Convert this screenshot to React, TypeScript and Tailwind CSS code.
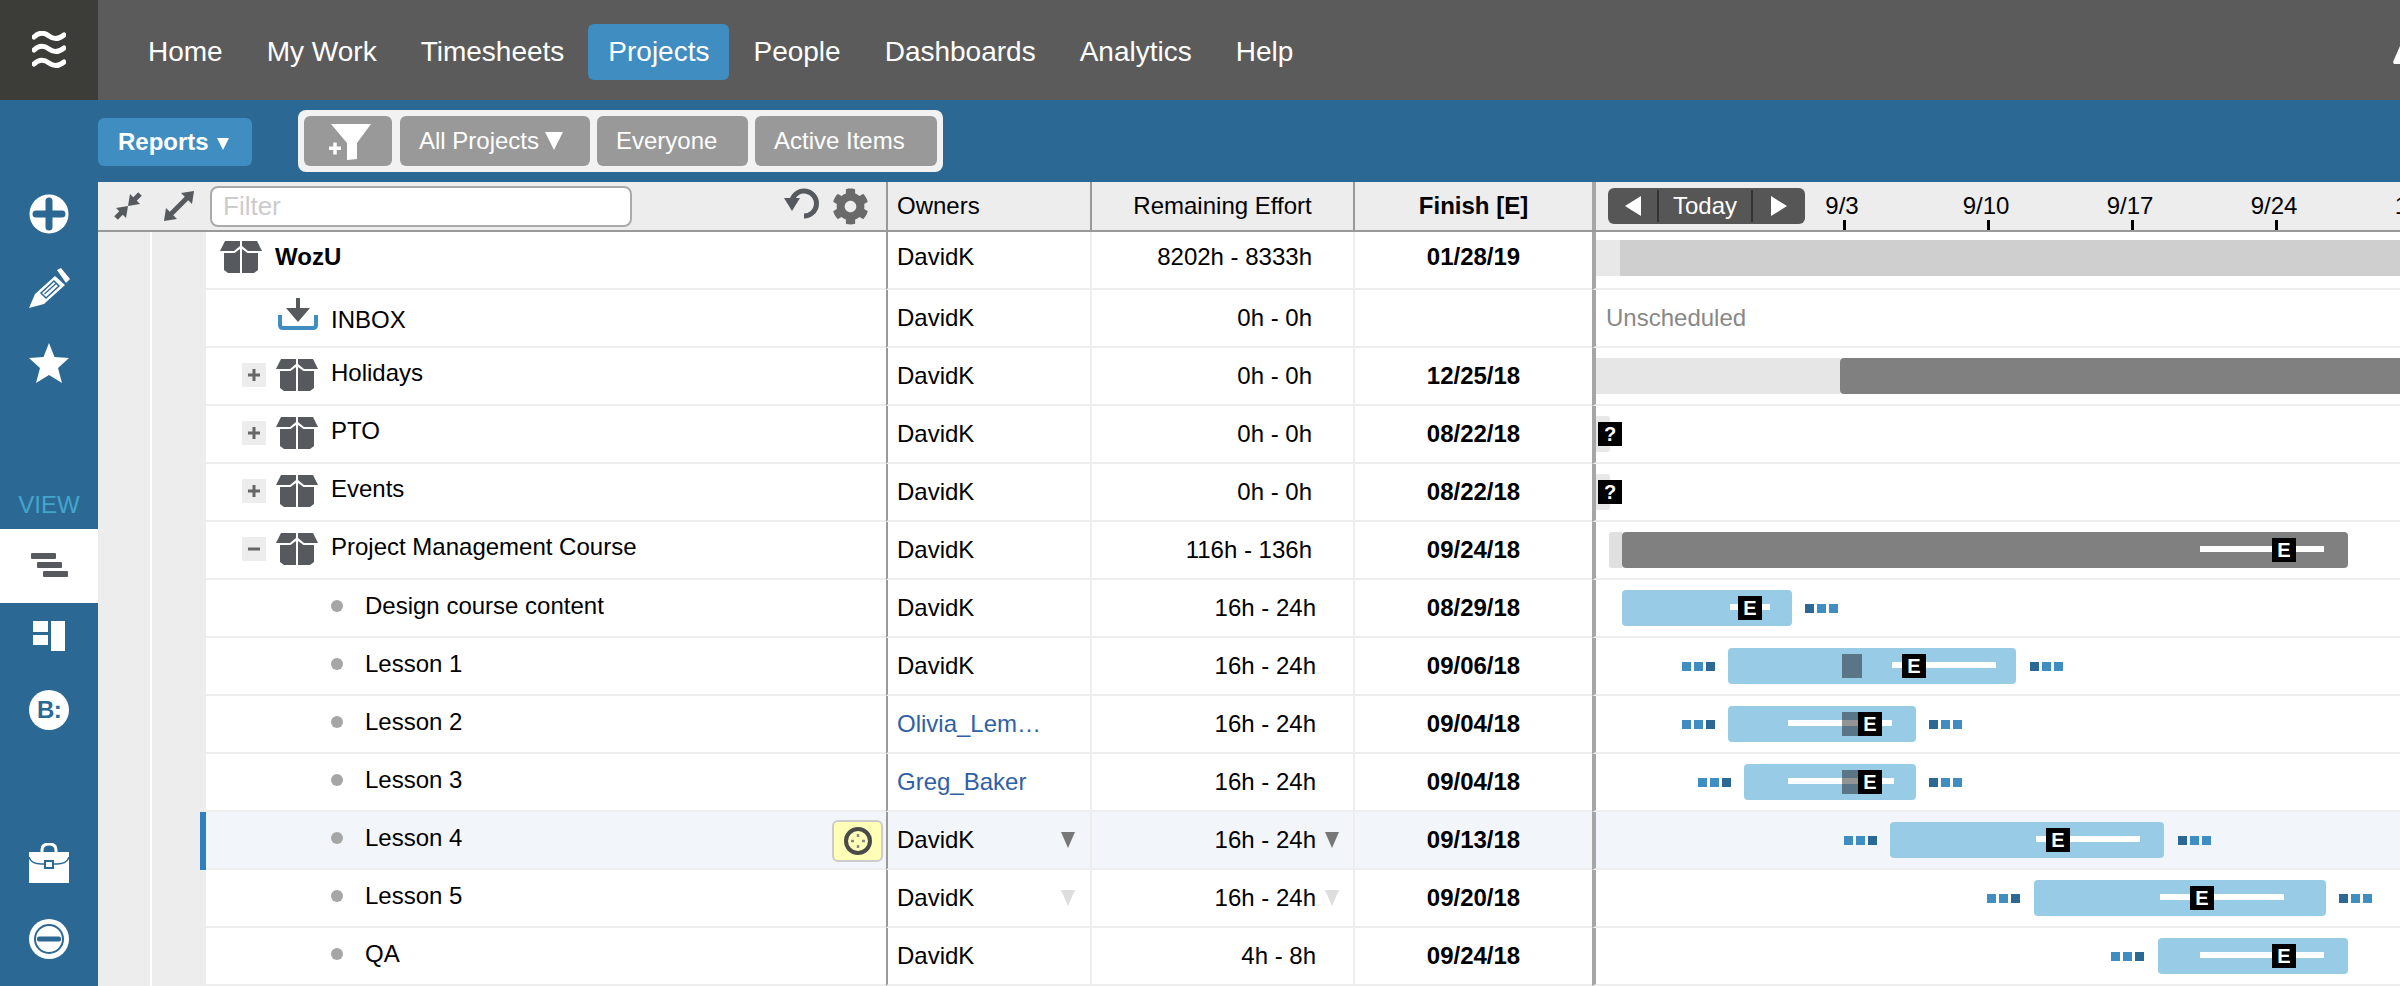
import { FaCog } from 'react-icons/fa';

type Bar = {
  left: number;
  right: number;
  line?: [number, number];
  e?: number;
  marker?: boolean;
  before?: number;
  after?: number;
};

type Row = {
  name: string;
  kind: 'root' | 'inbox' | 'plus' | 'minus' | 'task';
  owner: string;
  ownerLink?: boolean;
  effort: string;
  effortPad: string;
  finish: string;
  bar?: Bar;
};

const NAV = ['Home', 'My Work', 'Timesheets', 'Projects', 'People', 'Dashboards', 'Analytics', 'Help'];

const ROWS: Row[] = [
  { name: 'WozU', kind: 'root', owner: 'DavidK', effort: '8202h - 8333h', effortPad: 'pr-[41px]', finish: '01/28/19' },
  { name: 'INBOX', kind: 'inbox', owner: 'DavidK', effort: '0h - 0h', effortPad: 'pr-[41px]', finish: '' },
  { name: 'Holidays', kind: 'plus', owner: 'DavidK', effort: '0h - 0h', effortPad: 'pr-[41px]', finish: '12/25/18' },
  { name: 'PTO', kind: 'plus', owner: 'DavidK', effort: '0h - 0h', effortPad: 'pr-[41px]', finish: '08/22/18' },
  { name: 'Events', kind: 'plus', owner: 'DavidK', effort: '0h - 0h', effortPad: 'pr-[41px]', finish: '08/22/18' },
  { name: 'Project Management Course', kind: 'minus', owner: 'DavidK', effort: '116h - 136h', effortPad: 'pr-[41px]', finish: '09/24/18' },
  {
    name: 'Design course content', kind: 'task', owner: 'DavidK', effort: '16h - 24h', effortPad: 'pr-[37px]', finish: '08/29/18',
    bar: { left: 1622, right: 1792, line: [1730, 1770], e: 1738, after: 1805 },
  },
  {
    name: 'Lesson 1', kind: 'task', owner: 'DavidK', effort: '16h - 24h', effortPad: 'pr-[37px]', finish: '09/06/18',
    bar: { left: 1728, right: 2016, line: [1892, 1996], e: 1902, marker: true, before: 1682, after: 2030 },
  },
  {
    name: 'Lesson 2', kind: 'task', owner: 'Olivia_Lem…', ownerLink: true, effort: '16h - 24h', effortPad: 'pr-[37px]', finish: '09/04/18',
    bar: { left: 1728, right: 1916, line: [1788, 1892], e: 1858, marker: true, before: 1682, after: 1929 },
  },
  {
    name: 'Lesson 3', kind: 'task', owner: 'Greg_Baker', ownerLink: true, effort: '16h - 24h', effortPad: 'pr-[37px]', finish: '09/04/18',
    bar: { left: 1744, right: 1916, line: [1788, 1894], e: 1858, marker: true, before: 1698, after: 1929 },
  },
  {
    name: 'Lesson 4', kind: 'task', owner: 'DavidK', effort: '16h - 24h', effortPad: 'pr-[37px]', finish: '09/13/18',
    bar: { left: 1890, right: 2164, line: [2036, 2140], e: 2046, before: 1844, after: 2178 },
  },
  {
    name: 'Lesson 5', kind: 'task', owner: 'DavidK', effort: '16h - 24h', effortPad: 'pr-[37px]', finish: '09/20/18',
    bar: { left: 2034, right: 2326, line: [2160, 2284], e: 2190, before: 1987, after: 2339 },
  },
  {
    name: 'QA', kind: 'task', owner: 'DavidK', effort: '4h - 8h', effortPad: 'pr-[37px]', finish: '09/24/18',
    bar: { left: 2158, right: 2348, line: [2200, 2324], e: 2272, before: 2111 },
  },
];

// timeline column starts at x=1596 in the page
const tx = (x: number) => x - 1596;

const TICKS = [
  { label: '9/3', x: 1844 },
  { label: '9/10', x: 1988 },
  { label: '9/17', x: 2132 },
  { label: '9/24', x: 2276 },
  { label: '10/1', x: 2420 },
];

function BoxIcon() {
  return (
    <svg width="42" height="32" viewBox="0 0 42 32" className="shrink-0" fill="#565a5e">
      <polygon points="5,0 20,0 20,5 14,10 0,10" />
      <polygon points="22,0 37,0 42,10 28,10 22,5" />
      <polygon points="4,12 14.500,12 20,8 20,32 8,32 4,29" />
      <polygon points="38,12 27.500,12 22,8 22,32 34,32 38,29" />
    </svg>
  );
}

function InboxIcon() {
  return (
    <svg width="40" height="32" viewBox="0 0 40 32" className="mb-2 shrink-0">
      <path d="M2 17 V27 Q2 30 5 30 H35 Q38 30 38 27 V17" fill="none" stroke="#3f8dc1" strokeWidth="4" />
      <path d="M18 0 H22 V10 H32 L20 24 L8 10 H18 Z" fill="#565a5e" />
    </svg>
  );
}

function Dots({ x, top, dark }: { x: number; top: number; dark: number }) {
  return (
    <div className="absolute flex gap-[3px]" style={{ left: tx(x), top }}>
      {[0, 1, 2].map((i) => (
        <span key={i} className={`h-[9px] w-[9px] ${i === dark ? 'bg-[#2b6994]' : 'bg-[#3f8dc1]'}`} />
      ))}
    </div>
  );
}

function Flag({ x, top, text }: { x: number; top: number; text: string }) {
  return (
    <div
      className="absolute flex h-6 w-6 items-center justify-center bg-black text-[20px] font-bold leading-none text-white"
      style={{ left: tx(x), top }}
    >
      {text}
    </div>
  );
}

function TaskBar({ bar }: { bar: Bar }) {
  return (
    <>
      {bar.before && <Dots x={bar.before} top={24} dark={2} />}
      <div className="absolute top-[10px] h-9 rounded-[4px] bg-[#98cbe6]" style={{ left: tx(bar.left), width: bar.right - bar.left }} />
      {bar.line && <div className="absolute top-6 h-[6px] bg-white" style={{ left: tx(bar.line[0]), width: bar.line[1] - bar.line[0] }} />}
      {bar.marker && <div className="absolute top-4 h-6 w-5 bg-black/[0.42]" style={{ left: tx(1842) }} />}
      {bar.e && <Flag x={bar.e} top={16} text="E" />}
      {bar.after && <Dots x={bar.after} top={24} dark={0} />}
    </>
  );
}

function Gantt({ row, index }: { row: Row; index: number }) {
  if (row.bar) return <TaskBar bar={row.bar} />;
  if (index === 0) {
    return (
      <div className="absolute left-0 right-0 top-2 flex h-9">
        <div className="w-6 bg-[#e8e8e8]" />
        <div className="flex-1 bg-[#cfcfcf]" />
      </div>
    );
  }
  if (index === 1) {
    return <div className="flex h-full items-center pl-[10px] text-[#888]">Unscheduled</div>;
  }
  if (index === 2) {
    return (
      <div className="absolute left-0 right-0 top-[10px] flex h-9">
        <div className="w-[244px] bg-[#e6e6e6]" />
        <div className="flex-1 rounded-l-[4px] bg-[#808080]" />
      </div>
    );
  }
  if (index === 3 || index === 4) {
    return (
      <>
        <div className="absolute left-0 top-[10px] h-9 w-[14px] rounded-r-[3px] bg-[#e8e8e8]" />
        <Flag x={1598} top={16} text="?" />
      </>
    );
  }
  return (
    <>
      <div className="absolute top-[10px] flex h-9" style={{ left: tx(1609), width: 2348 - 1609 }}>
        <div className="w-[13px] rounded-l-[3px] bg-[#e0e0e0]" />
        <div className="flex-1 rounded-[4px] bg-[#808080]" />
      </div>
      <div className="absolute top-6 h-[6px] bg-white" style={{ left: tx(2200), width: 124 }} />
      <Flag x={2272} top={16} text="E" />
    </>
  );
}

function TableRow({ row, index }: { row: Row; index: number }) {
  const selected = row.name === 'Lesson 4';
  const bg = selected ? 'bg-[#f2f5f9]' : 'bg-white';
  const faded = row.name === 'Lesson 5';
  const showCaret = selected || faded;
  const caret = selected ? 'border-t-[#777]' : 'border-t-[#ddd]';
  const lift = index === 0 ? 'pb-[6px]' : '';

  return (
    <div className="flex h-[58px] shrink-0">
      <div className="w-[52px] shrink-0 bg-[#ededed]" />
      <div className="w-[2px] shrink-0 bg-white" />
      <div className="relative w-[54px] shrink-0 bg-[#ededed]">
        {selected && <div className="absolute bottom-0 right-0 top-0 w-[6px] bg-[#2f7ebf]" />}
      </div>

      <div className={`relative flex w-[680px] shrink-0 items-center border-b-2 border-[#eee] ${bg}`}>
        {row.kind === 'root' && (
          <div className="flex items-center pb-[6px] pl-[14px]">
            <BoxIcon />
            <span className="ml-[13px] font-bold">{row.name}</span>
          </div>
        )}
        {row.kind === 'inbox' && (
          <div className="flex items-center pl-[72px]">
            <InboxIcon />
            <span className="ml-[13px] mt-1">{row.name}</span>
          </div>
        )}
        {(row.kind === 'plus' || row.kind === 'minus') && (
          <div className="flex items-center pb-[2px] pl-[36px]">
            <span className="flex h-6 w-6 shrink-0 items-center justify-center bg-[#ededed]">
              <svg width="12" height="12" viewBox="0 0 12 12" fill="#666">
                <rect x="0" y="4.500" width="12" height="3" />
                {row.kind === 'plus' && <rect x="4.500" y="0" width="3" height="12" />}
              </svg>
            </span>
            <span className="ml-[10px]"><BoxIcon /></span>
            <span className="mb-[4px] ml-[13px]">{row.name}</span>
          </div>
        )}
        {row.kind === 'task' && (
          <div className="flex items-center pb-1 pl-[125px]">
            <span className="h-3 w-3 rounded-full bg-[#a6a6a6]" />
            <span className="ml-[22px]">{row.name}</span>
          </div>
        )}
        {selected && (
          <div className="absolute right-[3px] top-2 flex h-[42px] w-[51px] items-center justify-center rounded-[6px] border-2 border-[#ccc] bg-[#ffffb8]">
            <svg width="30" height="30" viewBox="0 0 30 30">
              <circle cx="15" cy="15" r="12" fill="none" stroke="#4a4a4a" strokeWidth="4" />
              <path d="M15 8v3M15 19v3M8 15h3M19 15h3" stroke="#888" strokeWidth="2.500" />
            </svg>
          </div>
        )}
      </div>

      <div className={`flex w-[204px] shrink-0 items-center justify-between border-b-2 border-l-2 border-b-[#eee] border-l-[#999] pl-[9px] pr-[15px] ${bg} ${lift}`}>
        <span className={row.ownerLink ? 'text-[#2f5fa5]' : ''}>{row.owner}</span>
        {showCaret && <span className={`h-0 w-0 border-x-[7px] border-t-[16px] border-x-transparent ${caret}`} />}
      </div>

      <div className={`relative flex w-[263px] shrink-0 items-center justify-end border-b-2 border-l-2 border-[#eee] ${row.effortPad} ${bg} ${lift}`}>
        {row.effort}
        {showCaret && <span className={`absolute left-[233px] top-5 h-0 w-0 border-x-[7px] border-t-[16px] border-x-transparent ${caret}`} />}
      </div>

      <div className={`flex w-[239px] shrink-0 items-center justify-center border-b-2 border-l-2 border-[#eee] font-bold ${bg} ${lift}`}>
        {row.finish}
      </div>

      <div className={`relative min-w-0 flex-1 overflow-hidden border-b-2 border-l-[4px] border-b-[#eee] border-l-[#a6a6a6] ${bg}`}>
        <Gantt row={row} index={index} />
      </div>
    </div>
  );
}

export default function App() {
  return (
    <div className="flex h-[986px] w-[2400px] flex-col overflow-hidden bg-white font-['Liberation_Sans',Arial,sans-serif] text-[24px] leading-none text-black">
      {/* Top nav */}
      <header className="flex h-[100px] shrink-0 items-center bg-[#5b5b5b]">
        <div className="flex h-full w-[98px] shrink-0 items-center justify-center bg-[#3c3d38]">
          <svg width="34" height="38" viewBox="0 0 34 38" fill="none" stroke="white" strokeWidth="5" strokeLinecap="round">
            <path d="M2 6 C8 0 13 2 17 5 S26 9 32 4" />
            <path d="M2 19 C8 13 13 15 17 18 S26 22 32 17" />
            <path d="M2 33 C8 27 13 29 17 32 S26 36 32 31" />
          </svg>
        </div>
        <nav className="ml-[30px] mt-1 flex gap-1">
          {NAV.map((item) => (
            <div
              key={item}
              className={`flex h-14 items-center rounded-[6px] px-5 text-[28px] text-white ${item === 'Projects' ? 'bg-[#3f8dc1]' : ''}`}
            >
              {item}
            </div>
          ))}
        </nav>
        <svg width="7" height="18" viewBox="0 0 7 18" className="ml-auto mt-[10px]" fill="white">
          <polygon points="0,16 7,0 7,18 1,18" />
        </svg>
      </header>

      {/* Sub bar */}
      <div className="flex h-[82px] shrink-0 items-start bg-[#2b6994] pl-[98px]">
        <div className="mt-[18px] flex h-12 w-[154px] items-center gap-2 rounded-[6px] bg-[#3f8dc1] pl-5 font-bold text-white">
          Reports
          <span className="mt-[3px] h-0 w-0 border-x-[6px] border-t-[12px] border-x-transparent border-t-white" />
        </div>
        <div className="ml-[46px] mt-[10px] flex h-[62px] rounded-[8px] bg-[#f2f2f2] p-[6px]">
          <div className="flex w-[88px] items-center justify-center rounded-[6px] bg-[#999]">
            <svg width="88" height="50" viewBox="0 0 88 50" fill="white">
              <polygon points="27,8 67,8 53,27 53,43 43,44 43,27" />
              <path d="M25 30.500h12v3.500H25zM29.250 26.500h3.500v12h-3.500z" />
            </svg>
          </div>
          <div className="ml-2 flex w-[190px] items-center gap-[6px] rounded-[6px] bg-[#999] pl-[19px] text-white">
            All Projects
            <span className="h-0 w-0 border-x-[9px] border-t-[18px] border-x-transparent border-t-white" />
          </div>
          <div className="ml-[7px] flex w-[151px] items-center rounded-[6px] bg-[#999] pl-[19px] text-white">Everyone</div>
          <div className="ml-[7px] flex w-[182px] items-center rounded-[6px] bg-[#999] pl-[19px] text-white">Active Items</div>
        </div>
      </div>

      <div className="flex min-h-0 flex-1">
        {/* Side rail */}
        <aside className="flex w-[98px] shrink-0 flex-col items-center bg-[#2b6994] text-white">
          <svg width="40" height="40" viewBox="0 0 40 40" className="mt-3 shrink-0">
            <circle cx="20" cy="20" r="19.500" fill="white" />
            <path d="M20 7v26M7 20h26" stroke="#2b6994" strokeWidth="7" strokeLinecap="round" />
          </svg>
          <svg width="41" height="40" viewBox="0 0 41 40" className="mt-[34px] shrink-0" fill="white">
            <path d="M0 40 L6 26 L26 8 L36 17 L15 36 Z" />
            <path d="M28 2 L32 0 L41 11 L37 15 Z" />
            <polygon points="12,25 25,13 30,18 17,30" fill="none" stroke="#2b6994" strokeWidth="1.500" />
            <path d="M15.500 26 L27 15.500" stroke="#2b6994" strokeWidth="1.200" />
          </svg>
          <svg width="42" height="40" viewBox="0 0 42 40" className="mt-[35px] shrink-0" fill="white">
            <polygon points="21,0 26.500,14 41,15 30,25 34,40 21,32 8,40 12,25 1,15 15.500,14" />
          </svg>
          <div className="mt-[110px] text-[24px] text-[#44a5cc]">VIEW</div>
          <div className="mt-3 flex h-[74px] w-full shrink-0 items-center justify-center bg-white pb-[2px]">
            <div className="flex w-[37px] flex-col gap-[3px]">
              <span className="h-[6px] w-[25px] rounded-[1px] bg-[#565a5e]" />
              <span className="ml-[6px] h-[6px] w-[25px] rounded-[1px] bg-[#565a5e]" />
              <span className="ml-3 h-[6px] w-[25px] rounded-[1px] bg-[#565a5e]" />
            </div>
          </div>
          <svg width="32" height="30" viewBox="0 0 32 30" className="mt-[18px] shrink-0" fill="white">
            <rect x="0" y="0" width="15" height="11" />
            <rect x="0" y="14" width="15" height="10" />
            <rect x="18" y="0" width="14" height="30" />
          </svg>
          <div className="mt-[39px] flex h-10 w-10 shrink-0 items-center justify-center rounded-full bg-white text-[24px] font-bold tracking-tight text-[#2b6994]">
            B:
          </div>
          <svg width="40" height="40" viewBox="0 0 40 40" className="mt-[113px] shrink-0">
            <path d="M13 10 V7 Q13 1 20 1 Q27 1 27 7 V10" fill="none" stroke="white" strokeWidth="3" />
            <rect x="0" y="9" width="40" height="31" fill="white" />
            <path d="M0 14 Q2 21 12 21 H28 Q38 21 40 14" fill="none" stroke="#2b6994" strokeWidth="1.500" />
            <rect x="16" y="18" width="8" height="7" fill="white" stroke="#2b6994" strokeWidth="2" />
          </svg>
          <svg width="40" height="40" viewBox="0 0 40 40" className="mt-9 shrink-0">
            <circle cx="20" cy="20" r="20" fill="white" />
            <circle cx="20" cy="20" r="14" fill="white" stroke="#2b6994" strokeWidth="2" />
            <rect x="8" y="17.500" width="24" height="5" rx="2" fill="#2b6994" />
          </svg>
        </aside>

        {/* Table + gantt */}
        <main className="flex min-w-0 flex-1 flex-col">
          <div className="flex h-[50px] shrink-0 border-b-2 border-[#999] bg-[#ededed]">
            <div className="flex w-[788px] shrink-0 items-center">
              <svg width="30" height="30" viewBox="0 0 30 30" className="ml-[15px]" fill="none">
                <path d="M27 3 L20 10" stroke="#565a5e" strokeWidth="5" />
                <polygon points="15,15 17,3 27,13" fill="#565a5e" />
                <path d="M3 27 L10 20" stroke="#565a5e" strokeWidth="5" />
                <polygon points="15,15 13,27 3,17" fill="#565a5e" />
              </svg>
              <svg width="30" height="30" viewBox="0 0 30 30" className="ml-[21px]" fill="none">
                <path d="M24 6 L6 24" stroke="#565a5e" strokeWidth="5" />
                <polygon points="30,0 28,13 17,2" fill="#565a5e" />
                <polygon points="0,30 2,17 13,28" fill="#565a5e" />
              </svg>
              <input
                placeholder="Filter"
                readOnly
                className="ml-[16px] h-[41px] w-[422px] rounded-[8px] border-2 border-[#aaa] bg-white pl-[11px] text-[26px] placeholder:text-[#ccc]"
              />
              <svg width="38" height="34" viewBox="0 0 38 34" className="mb-[6px] ml-[152px]" fill="none">
                <path d="M8 14 A 12.500 12.500 0 1 1 20 30" stroke="#565a5e" strokeWidth="5" />
                <polygon points="0,12 16,12 8,25" fill="#565a5e" />
              </svg>
              <FaCog className="ml-[10px] h-[37px] w-[37px] text-[#6a6a6a]" />
            </div>
            <div className="flex w-[204px] shrink-0 items-center border-l-2 border-[#999] pl-[9px]">Owners</div>
            <div className="flex w-[263px] shrink-0 items-center justify-center border-l-2 border-[#999]">Remaining Effort</div>
            <div className="flex w-[239px] shrink-0 items-center justify-center border-l-2 border-[#999] font-bold">Finish [E]</div>
            <div className="relative min-w-0 flex-1 overflow-hidden border-l-[4px] border-[#a6a6a6]">
              <div className="absolute left-3 top-[6px] flex h-9 w-[197px] items-center rounded-[6px] bg-[#565656] text-white">
                <div className="flex h-[32px] w-[51px] items-center justify-center border-r-2 border-[#333]">
                  <span className="h-0 w-0 border-y-[10px] border-r-[16px] border-y-transparent border-r-white" />
                </div>
                <div className="flex h-[32px] w-[94px] items-center justify-center border-r-2 border-[#333]">Today</div>
                <div className="flex h-[32px] flex-1 items-center justify-center">
                  <span className="h-0 w-0 border-y-[10px] border-l-[16px] border-y-transparent border-l-white" />
                </div>
              </div>
              {TICKS.map((t) => (
                <div key={t.label}>
                  <div className="absolute top-[12px] w-[80px] text-center" style={{ left: tx(t.x) - 42 }}>
                    {t.label}
                  </div>
                  <div className="absolute bottom-0 h-[10px] w-[3px] bg-black" style={{ left: tx(t.x) - 1 }} />
                </div>
              ))}
            </div>
          </div>

          {ROWS.map((row, i) => (
            <TableRow key={row.name} row={row} index={i} />
          ))}
        </main>
      </div>
    </div>
  );
}
